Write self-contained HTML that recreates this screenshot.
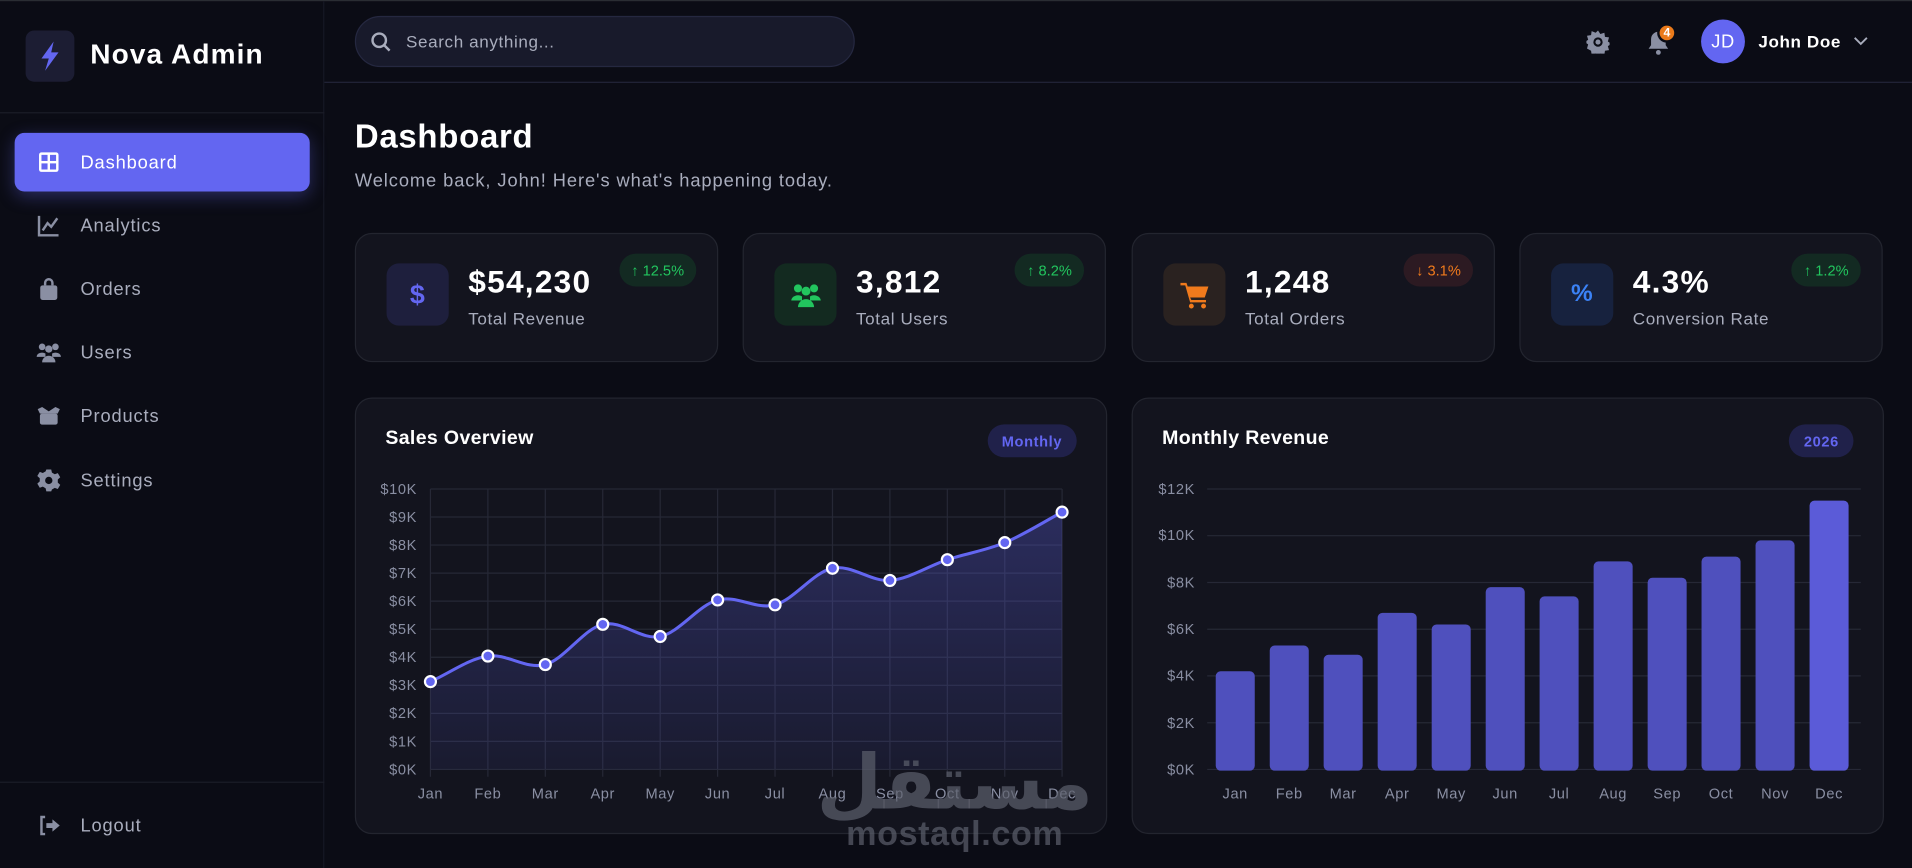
<!DOCTYPE html>
<html><head><meta charset="utf-8"><style>
*{margin:0;padding:0;box-sizing:border-box}
html,body{width:1912px;height:868px;overflow:hidden;background:#0b0c15}
#w{width:1568px;height:712px;transform:scale(1.21939);transform-origin:0 0;position:relative;font-family:"Liberation Sans",sans-serif;color:#fff;background:#0b0c15;border-top:1px solid #2a2d33;letter-spacing:.5px}
.a{position:absolute}
.nav{position:absolute;left:12px;width:242px;height:48px;display:flex;align-items:center;padding-left:18px;font-size:15px;color:#a9adbd;border-radius:8px;letter-spacing:.7px}
.nav svg{width:20px;height:20px;margin-right:16px}
.card{position:absolute;top:190px;width:298px;height:106px;background:#13141e;border:1px solid #23252f;border-radius:14px}
.ib{position:absolute;left:25px;top:24px;width:51px;height:51px;border-radius:10px;display:flex;align-items:center;justify-content:center}
.val{position:absolute;left:92px;top:24px;font-size:26px;font-weight:bold;letter-spacing:1px}
.lbl{position:absolute;left:92px;top:61px;font-size:14px;color:#a9adbd;letter-spacing:.5px}
.bd{position:absolute;top:16px;right:17px;height:27px;padding:0 10px;border-radius:14px;font-size:12px;display:flex;align-items:center;letter-spacing:0}
.cc{position:absolute;top:325px;width:617px;height:358px;background:#13141e;border:1px solid #23252f;border-radius:14px}
.ct{position:absolute;left:24px;top:24px;font-size:16px;font-weight:bold;letter-spacing:.3px}
.pill{position:absolute;top:21px;height:27px;padding:0 12px;border-radius:14px;background:#20214a;color:#6366f1;font-size:12px;font-weight:bold;display:flex;align-items:center}
</style></head><body><div id="w">
<div class="a" style="left:0;top:0;width:266px;height:712px;border-right:1px solid #161824"></div>
<div class="a" style="left:21px;top:24px;width:40px;height:42px;border-radius:7px;background:#1c1d33;display:flex;align-items:center;justify-content:center"><svg width="20" height="26" viewBox="0 0 20 26"><path d="M13 1 L3 15 H9 L6 25 L17 10 H11 Z" fill="#6366f1"/></svg></div>
<div class="a" style="left:74px;top:30px;font-size:23px;font-weight:bold;letter-spacing:.9px">Nova Admin</div>
<div class="a" style="left:0;top:91px;width:266px;height:1px;background:#1b1d28"></div>
<div class="nav" style="top:108px;background:#6366f1;color:#fff;box-shadow:0 4px 14px rgba(99,102,241,.35)"><svg viewBox="0 0 20 20"><rect x="2" y="2" width="16" height="16" rx="2" fill="#fff"/><rect x="4" y="4" width="5" height="5" fill="#6366f1"/><rect x="11" y="4" width="5" height="5" fill="#6366f1"/><rect x="4" y="11" width="5" height="5" fill="#6366f1"/><rect x="11" y="11" width="5" height="5" fill="#6366f1"/></svg>Dashboard</div>
<div class="nav" style="top:160px"><svg viewBox="0 0 20 20" fill="none" stroke="#8a8fa3" stroke-width="2"><path d="M2 2V18H18"/><path d="M5 14L9 8L12 11L17 4"/></svg>Analytics</div>
<div class="nav" style="top:212px"><svg viewBox="0 0 20 20"><path d="M7 7V5a3 3 0 0 1 6 0v2" stroke="#8a8fa3" stroke-width="2" fill="none"/><rect x="3" y="7" width="14" height="12" rx="2" fill="#8a8fa3"/></svg>Orders</div>
<div class="nav" style="top:264px"><svg viewBox="0 0 22 20" fill="#8a8fa3"><circle cx="5" cy="5" r="3"/><circle cx="17" cy="5" r="3"/><circle cx="11" cy="7" r="3.3"/><path d="M0 14a5 4 0 0 1 8-3v3z"/><path d="M22 14a5 4 0 0 0-8-3v3z"/><path d="M5 19a6 6 0 0 1 12 0z"/></svg>Users</div>
<div class="nav" style="top:316px"><svg viewBox="0 0 22 20" fill="#8a8fa3"><path d="M1 4L5 2L11 6L17 2L21 4L19 8H3Z"/><rect x="3" y="8" width="16" height="10" rx="2"/></svg>Products</div>
<div class="nav" style="top:369px"><svg viewBox="0 0 20 20"><path fill="#8a8fa3" d="M8 1h4l.6 2.6 2.3 1.3 2.5-.9 2 3.4-2 1.8v2.6l2 1.8-2 3.4-2.5-.9-2.3 1.3L12 19H8l-.6-2.6-2.3-1.3-2.5.9-2-3.4 2-1.8V8.2l-2-1.8 2-3.4 2.5.9 2.3-1.3z"/><circle cx="10" cy="10" r="3" fill="#0b0c15"/></svg>Settings</div>
<div class="a" style="left:0;top:640px;width:266px;height:1px;background:#1b1d28"></div>
<div class="nav" style="top:652px"><svg viewBox="0 0 20 20"><path d="M7 3H4v14h3" stroke="#8a8fa3" stroke-width="2" fill="none"/><path d="M8 8h5V5l6 5-6 5v-3H8z" fill="#8a8fa3"/></svg>Logout</div>
<div class="a" style="left:291px;top:12px;width:410px;height:42px;border-radius:21px;background:#181a2b;border:1px solid #252840"></div>
<svg class="a" style="left:304px;top:25px" width="17" height="17" viewBox="0 0 17 17" fill="none" stroke="#a9adbd" stroke-width="2"><circle cx="7" cy="7" r="5.5"/><path d="M11 11L15.5 15.5"/></svg>
<div class="a" style="left:333px;top:25px;font-size:14px;color:#a9adbd">Search anything...</div>
<div class="a" style="left:266px;top:66px;width:1302px;height:1px;background:#222538"></div>
<svg class="a" style="left:1301px;top:24px" width="19" height="19" viewBox="0 0 20 20"><path fill="#8a8fa3" d="M10 0l2 3 3.5-1 .5 3.5 3.5.5-1 3.5 3 2-3 2 1 3.5-3.5.5-.5 3.5-3.5-1-2 3-2-3-3.5 1-.5-3.5L.5 15.5l1-3.5-3-2 3-2-1-3.5L4 4 4.5.5 8 2z"/><circle cx="10" cy="10" r="4" fill="#0b0c15"/><circle cx="10" cy="10" r="2.2" fill="#8a8fa3"/></svg>
<svg class="a" style="left:1351px;top:24px" width="18" height="20" viewBox="0 0 18 20"><path fill="#8a8fa3" d="M9 1a6 6 0 0 1 6 6v5l2 3H1l2-3V7a6 6 0 0 1 6-6z"/><circle cx="9" cy="18" r="2" fill="#8a8fa3"/></svg>
<div class="a" style="left:1359px;top:18px;width:16px;height:16px;border-radius:8px;background:#ea7a1a;border:2px solid #0b0c15;font-size:10px;font-weight:bold;display:flex;align-items:center;justify-content:center;letter-spacing:0">4</div>
<div class="a" style="left:1395px;top:15px;width:36px;height:36px;border-radius:18px;background:#6366f1;font-size:15px;display:flex;align-items:center;justify-content:center">JD</div>
<div class="a" style="left:1442px;top:25px;font-size:14px;font-weight:bold">John Doe</div>
<svg class="a" style="left:1520px;top:29px" width="12" height="8" viewBox="0 0 12 8" fill="none" stroke="#a9adbd" stroke-width="1.5"><path d="M1 1l5 5 5-5"/></svg>
<div class="a" style="left:291px;top:96px;font-size:27px;font-weight:bold;letter-spacing:.6px">Dashboard</div>
<div class="a" style="left:291px;top:139px;font-size:15px;color:#a9adbd;letter-spacing:.75px">Welcome back, John! Here's what's happening today.</div>
<div class="card" style="left:291px"><div class="ib" style="background:#1e1f3d;color:#6366f1;font-size:22px;font-weight:bold">$</div><div class="val">$54,230</div><div class="lbl">Total Revenue</div><div class="bd" style="background:#132a22;color:#22c55e">↑ 12.5%</div></div>
<div class="card" style="left:609px"><div class="ib" style="background:#132a20"><svg width="26" height="22" viewBox="0 0 22 20" fill="#22c55e"><circle cx="5" cy="5" r="3"/><circle cx="17" cy="5" r="3"/><circle cx="11" cy="7" r="3.3"/><path d="M0 14a5 4 0 0 1 8-3v3z"/><path d="M22 14a5 4 0 0 0-8-3v3z"/><path d="M5 19a6 6 0 0 1 12 0z"/></svg></div><div class="val">3,812</div><div class="lbl">Total Users</div><div class="bd" style="background:#132a22;color:#22c55e">↑ 8.2%</div></div>
<div class="card" style="left:928px"><div class="ib" style="background:#2a2220"><svg width="24" height="22" viewBox="0 0 24 22" fill="#f07a1c"><path d="M0 1h5l1 3h17l-3 9H8l1 2h12v2H8l-4-14H0z"/><circle cx="9" cy="20" r="2"/><circle cx="19" cy="20" r="2"/></svg></div><div class="val">1,248</div><div class="lbl">Total Orders</div><div class="bd" style="background:#2c1a22;color:#f07a1c">↓ 3.1%</div></div>
<div class="card" style="left:1246px"><div class="ib" style="background:#17223e;color:#3b82f6;font-size:20px;font-weight:bold">%</div><div class="val">4.3%</div><div class="lbl">Conversion Rate</div><div class="bd" style="background:#132a22;color:#22c55e">↑ 1.2%</div></div>
<div class="cc" style="left:291px"><div class="ct">Sales Overview</div><div class="pill" style="right:24px">Monthly</div></div>
<div class="cc" style="left:928px"><div class="ct">Monthly Revenue</div><div class="pill" style="right:24px">2026</div></div>
<svg class="a" style="left:0;top:0" width="1568" height="712" font-family="Liberation Sans, sans-serif" font-size="12" fill="#8a8fa3">
<defs><linearGradient id="g" x1="0" y1="0" x2="0" y2="1"><stop offset="0" stop-color="#6366f1" stop-opacity=".3"/><stop offset="1" stop-color="#6366f1" stop-opacity=".08"/></linearGradient></defs>
<g stroke="#262836" stroke-width="1">
<path d="M353 400H871M353 423H871M353 446H871M353 469H871M353 492H871M353 515H871M353 538H871M353 561H871M353 584H871M353 607H871M353 630H871"/>
<path d="M353 400V636M400.1 400V636M447.2 400V636M494.3 400V636M541.4 400V636M588.5 400V636M635.6 400V636M682.7 400V636M729.8 400V636M776.9 400V636M824 400V636M871 400V636"/>
<path d="M990 400H1526M990 438.3H1526M990 476.7H1526M990 515H1526M990 553.3H1526M990 591.7H1526M990 630H1526"/>
</g>
<path fill="url(#g)" d="M353 558C368.7 551 384.4 539.3 400.1 537C415.8 534.7 431.5 548.3 447.2 544C462.9 539.7 478.6 514.8 494.3 511C510 507.2 525.7 524.3 541.4 521C557.1 517.7 572.8 495.3 588.5 491C604.2 486.7 619.9 499.3 635.6 495C651.3 490.7 667 468.3 682.7 465C698.4 461.7 714.1 476.2 729.8 475C745.5 473.8 761.2 463.2 776.9 458C792.6 452.8 808.3 450.5 824 444C839.7 437.5 855.4 427.3 871 419L871 630L353 630Z"/>
<path fill="none" stroke="#6366f1" stroke-width="2.5" d="M353 558C368.7 551 384.4 539.3 400.1 537C415.8 534.7 431.5 548.3 447.2 544C462.9 539.7 478.6 514.8 494.3 511C510 507.2 525.7 524.3 541.4 521C557.1 517.7 572.8 495.3 588.5 491C604.2 486.7 619.9 499.3 635.6 495C651.3 490.7 667 468.3 682.7 465C698.4 461.7 714.1 476.2 729.8 475C745.5 473.8 761.2 463.2 776.9 458C792.6 452.8 808.3 450.5 824 444C839.7 437.5 855.4 427.3 871 419"/>
<g fill="#6366f1" stroke="#fff" stroke-width="1.8">
<circle cx="353" cy="558" r="4.5"/><circle cx="400.1" cy="537" r="4.5"/><circle cx="447.2" cy="544" r="4.5"/><circle cx="494.3" cy="511" r="4.5"/><circle cx="541.4" cy="521" r="4.5"/><circle cx="588.5" cy="491" r="4.5"/><circle cx="635.6" cy="495" r="4.5"/><circle cx="682.7" cy="465" r="4.5"/><circle cx="729.8" cy="475" r="4.5"/><circle cx="776.9" cy="458" r="4.5"/><circle cx="824" cy="444" r="4.5"/><circle cx="871" cy="419" r="4.5"/>
</g>
<g text-anchor="end">
<text x="342" y="404">$10K</text><text x="342" y="427">$9K</text><text x="342" y="450">$8K</text><text x="342" y="473">$7K</text><text x="342" y="496">$6K</text><text x="342" y="519">$5K</text><text x="342" y="542">$4K</text><text x="342" y="565">$3K</text><text x="342" y="588">$2K</text><text x="342" y="611">$1K</text><text x="342" y="634">$0K</text>
<text x="980" y="404">$12K</text><text x="980" y="442">$10K</text><text x="980" y="481">$8K</text><text x="980" y="519">$6K</text><text x="980" y="557">$4K</text><text x="980" y="596">$2K</text><text x="980" y="634">$0K</text>
</g>
<g text-anchor="middle">
<text x="353" y="654">Jan</text><text x="400.1" y="654">Feb</text><text x="447.2" y="654">Mar</text><text x="494.3" y="654">Apr</text><text x="541.4" y="654">May</text><text x="588.5" y="654">Jun</text><text x="635.6" y="654">Jul</text><text x="682.7" y="654">Aug</text><text x="729.8" y="654">Sep</text><text x="776.9" y="654">Oct</text><text x="824" y="654">Nov</text><text x="871" y="654">Dec</text>
<text x="1013" y="654">Jan</text><text x="1057.3" y="654">Feb</text><text x="1101.5" y="654">Mar</text><text x="1145.8" y="654">Apr</text><text x="1190.1" y="654">May</text><text x="1234.4" y="654">Jun</text><text x="1278.6" y="654">Jul</text><text x="1322.9" y="654">Aug</text><text x="1367.2" y="654">Sep</text><text x="1411.4" y="654">Oct</text><text x="1455.7" y="654">Nov</text><text x="1500" y="654">Dec</text>
</g>
<g fill="#4f50bd">
<rect x="997" y="549.5" width="32" height="81.5" rx="4"/><rect x="1041.3" y="528.4" width="32" height="102.6" rx="4"/><rect x="1085.5" y="536" width="32" height="95" rx="4"/><rect x="1129.8" y="501.6" width="32" height="129.4" rx="4"/><rect x="1174.1" y="511.1" width="32" height="119.9" rx="4"/><rect x="1218.4" y="480.5" width="32" height="150.5" rx="4"/><rect x="1262.6" y="488.1" width="32" height="142.9" rx="4"/><rect x="1306.9" y="459.4" width="32" height="171.6" rx="4"/><rect x="1351.2" y="472.8" width="32" height="158.2" rx="4"/><rect x="1395.4" y="455.5" width="32" height="175.5" rx="4"/><rect x="1439.7" y="442.2" width="32" height="188.8" rx="4"/><rect x="1484" y="409.6" width="32" height="221.4" rx="4" fill="#5b5bd8"/>
</g>
<text x="783" y="662" text-anchor="middle" font-family="Noto Sans CJK SC, DejaVu Sans, sans-serif" font-size="62" font-weight="bold" fill="#5d606c" fill-opacity=".7">مستقل</text>
<text x="783" y="692" text-anchor="middle" font-size="28" font-weight="bold" fill="#5d606c" fill-opacity=".7">mostaql.com</text>
</svg>
</div></body></html>
